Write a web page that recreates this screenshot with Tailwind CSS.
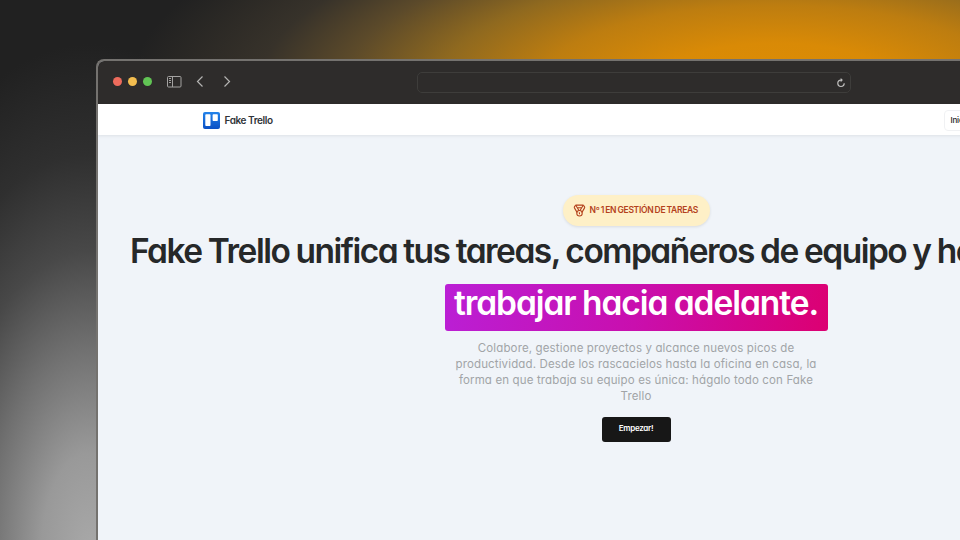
<!DOCTYPE html>
<html lang="es">
<head>
<meta charset="utf-8">
<title>Fake Trello</title>
<script src="https://cdn.jsdelivr.net/npm/@tailwindcss/browser@4"></script>
</head>
<body class="w-[960px] h-[540px] overflow-hidden bg-[#212121] font-['Inter',sans-serif] [font-feature-settings:'cv11']">
<div class="h-[540px] pl-[96px] pt-[59px] overflow-hidden bg-[radial-gradient(ellipse_560px_190px_at_775px_85px,#dd8d04_0%,#d98a06_22%,#bd7d10_42%,#8f691f_60%,#5c4a2a_77%,#37322a_92%,transparent_115%),radial-gradient(ellipse_220px_440px_at_90px_550px,#a8a8a8_0%,#999999_22%,#707070_46%,#484848_68%,#2f2f2f_90%,transparent_115%)]">
  <div class="w-[1078px] h-[500px] rounded-tl-[8px] border-t-2 border-l-2 border-[#74726f] overflow-hidden bg-[#f0f4f9] flex flex-col">
    <div class="h-[43px] shrink-0 bg-[#2e2c2b] flex items-center pl-[15px] pb-[2px]">
      <div class="flex gap-[6px]">
        <span class="size-[9px] rounded-full bg-[#ed6b5c]"></span>
        <span class="size-[9px] rounded-full bg-[#f3bd4f]"></span>
        <span class="size-[9px] rounded-full bg-[#61c454]"></span>
      </div>
      <svg class="ml-[15px] w-[15px] h-[12px]" viewBox="0 0 15 12" fill="none" stroke="#a3a2a1" stroke-width="1"><rect x=".5" y=".5" width="13.5" height="10.500" rx="1"/><path d="M5.500 .5v10.500M2 2.500h2M2 4.500h2M2 6.500h2"/></svg>
      <svg class="ml-[14px] w-[8px] h-[12px]" viewBox="0 0 8 12" fill="none" stroke="#b4b3b2" stroke-width="1.2"><path d="M6.500 .5L1.500 5.500l5 5"/></svg>
      <svg class="ml-[19px] w-[8px] h-[12px]" viewBox="0 0 8 12" fill="none" stroke="#b4b3b2" stroke-width="1.2"><path d="M1.500 .5l5 5-5 5"/></svg>
      <div class="relative top-px ml-[186px] w-[434px] h-[21px] rounded-[5px] border border-[#3e3d3b] flex items-center justify-end pr-[4px]">
        <svg class="w-[10px] h-[10px]" viewBox="0 0 10 10" fill="none" stroke="#c0bfbe" stroke-width="1.200"><path d="M5 2.100a3.200 3.200 0 1 0 3.200 3.200"/><path d="M4.700 0L6.900 2.100 4.700 4.200z" fill="#c0bfbe" stroke="none"/></svg>
      </div>
    </div>
    <div class="h-[31px] shrink-0 bg-white shadow-[0_1px_3px_#00000014] flex items-center pl-[105px] pt-[1px]">
      <svg class="w-[17px] h-[17px]" viewBox="0 0 17 17"><defs><linearGradient id="logo" x1="0" y1="0" x2="0" y2="1"><stop stop-color="#2383ea"/><stop offset="1" stop-color="#0b50c4"/></linearGradient></defs><rect width="17" height="17" rx="2" fill="url(#logo)"/><rect x="2.300" y="2.300" width="5.200" height="11.700" rx=".8" fill="#fff"/><rect x="9.600" y="2.300" width="5.200" height="6.700" rx=".8" fill="#fff"/></svg>
      <span class="ml-[4.500px] w-[50px] whitespace-nowrap text-[10px] font-semibold tracking-[-0.420px] text-[#303438]">Fake Trello</span>
      <div class="ml-[669px] h-[21px] w-[50px] rounded-[4px] border border-[#f0f1f3] flex items-center pl-[6px] text-[8px] font-medium tracking-[-0.2px] text-[#222]">Inicio</div>
    </div>
    <div class="flex-1 flex flex-col items-center pt-[60px]">
      <div class="h-[31px] w-[147px] rounded-full bg-[#fef0c7] shadow-[0_1px_3px_#0000001a] flex items-center pl-[10px]">
        <svg class="w-[13px] h-[13px] shrink-0" viewBox="0 0 24 24" fill="none" stroke="#b4421c" stroke-width="2" stroke-linecap="round" stroke-linejoin="round"><path d="M7.210 15 2.660 7.140a2 2 0 0 1 .13-2.200L4.400 2.800A2 2 0 0 1 6 2h12a2 2 0 0 1 1.600.8l1.600 2.140a2 2 0 0 1 .14 2.200L16.790 15M11 12 5.120 2.200M13 12l5.880-9.800M8 7h8"/><circle cx="12" cy="17" r="5"/><path d="M12 18v-2h-.5"/></svg>
        <span class="ml-[4px] whitespace-nowrap text-[8.500px] font-semibold tracking-[-0.320px] [word-spacing:-0.500px] text-[#b4421c]">Nº 1 EN GESTIÓN DE TAREAS</span>
      </div>
      <h1 class="w-full pl-[32px] mt-[5px] h-[40px] leading-[40px] whitespace-nowrap text-[33.500px] font-semibold tracking-[-1.500px] [word-spacing:-0.800px] text-[#262829]">Fake Trello unifica tus tareas, compañeros de equipo y hogar para</h1>
      <div class="mt-[13px] w-[383px] h-[47px] rounded-[3px] bg-[linear-gradient(100deg,#ba1fd5,#c90fae_50%,#dc0072)] text-white text-[33.500px] font-semibold tracking-[-1.050px] [word-spacing:-1px] leading-[38px] text-center whitespace-nowrap">trabajar hacia adelante.</div>
      <p class="mt-[9px] leading-[16px] text-[11.500px] tracking-[0.140px] text-[#a1a4a7] text-center whitespace-nowrap">Colabore, gestione proyectos y alcance nuevos picos de<br>productividad. Desde los rascacielos hasta la oficina en casa, la<br>forma en que trabaja su equipo es única: hágalo todo con Fake<br>Trello</p>
      <div class="mt-[13px] w-[69px] h-[25px] rounded-[3px] bg-[#171717] text-white text-[8px] font-semibold tracking-[-0.300px] leading-[23px] text-center">Empezar!</div>
    </div>
  </div>
</div>
</body>
</html>
